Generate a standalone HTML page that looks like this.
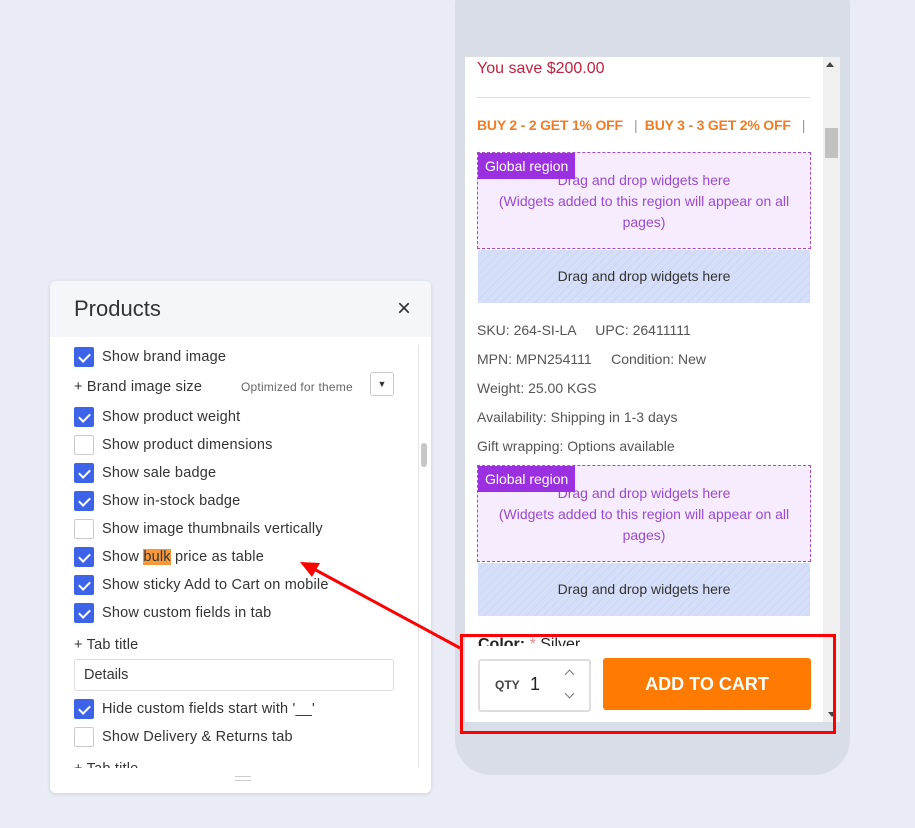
<!DOCTYPE html>
<html><head><meta charset="utf-8"><style>
*{box-sizing:border-box;margin:0;padding:0}
body{width:915px;height:828px;background:#e9ecf5;position:relative;overflow:hidden;font-family:"Liberation Sans",sans-serif}
.abs{position:absolute}
.phone{left:455px;top:-30px;width:395px;height:805px;background:#d9dde8;border-radius:36px}
.screen{left:465px;top:57px;width:375px;height:665px;background:#fff;overflow:hidden}
.sb{left:823px;top:57px;width:17px;height:665px;background:#f0f0f0}
.t{font-size:14px;color:#555}
.glob{left:477px;top:152px;width:334px;height:97px;background:#f6ecfd;border:1px dashed #a24cc8;color:#9a4ad0;font-size:14px;text-align:center;line-height:21px;padding-top:17px}
.glob b{position:absolute;left:0;top:0;background:#9b30e0;color:#fff;font-weight:normal;font-size:14px;padding:4px 7px;line-height:18px}
.drop{left:478px;width:332px;height:53px;background:repeating-linear-gradient(135deg,#d6dff9 0 5px,#cdd6f0 5px 6px);color:#333;font-size:14px;text-align:center;line-height:53px}
.panel{left:50px;top:281px;width:381px;height:512px;background:#fff;border-radius:6px;box-shadow:0 1px 4px rgba(0,0,0,.12);overflow:hidden}
.ph{height:56px;background:#f5f6fa;font-size:22px;color:#333;padding:15px 24px}
.row{position:absolute;left:24px;font-size:14.5px;color:#333;display:flex;align-items:center;height:20px;letter-spacing:0.2px}
.cb{width:20px;height:20px;border-radius:2px;margin-right:8px;border:1px solid #ccc;background:#fff;position:relative}
.cb.on{background:#3d64e8;border-color:#3d64e8}
.cb.on:after{content:"";position:absolute;left:6px;top:3px;width:5px;height:9px;border:solid #fff;border-width:0 2px 2px 0;transform:rotate(45deg)}
</style></head><body>
<div class="abs phone"></div>
<div class="abs screen"></div>
<div class="abs sb"></div>
<div class="abs" style="left:826px;top:62px;width:0;height:0;border:4px solid transparent;border-bottom:5px solid #444;border-top:0"></div>
<div class="abs" style="left:825px;top:128px;width:13px;height:30px;background:#c1c1c1"></div>
<div class="abs" style="left:477px;top:60px;font-size:16px;color:#c0223f">You save $200.00</div>
<div class="abs" style="left:477px;top:97px;width:333px;height:1px;background:#ddd"></div>
<div class="abs" style="left:477px;top:117px;font-size:14px;color:#f07c24;white-space:pre;font-weight:bold;letter-spacing:-0.2px">BUY 2 - 2 GET 1% OFF   <span style="color:#999;font-weight:normal">|</span>  BUY 3 - 3 GET 2% OFF   <span style="color:#999;font-weight:normal">|</span></div>
<div class="abs glob"><b>Global region</b>Drag and drop widgets here<br>(Widgets added to this region will appear on all pages)</div>
<div class="abs drop" style="top:250px">Drag and drop widgets here</div>
<div class="abs t" style="left:477px;top:322px">SKU: 264-SI-LA &nbsp;&nbsp;&nbsp;&nbsp;UPC: 26411111</div>
<div class="abs t" style="left:477px;top:351px">MPN: MPN254111 &nbsp;&nbsp;&nbsp;&nbsp;Condition: New</div>
<div class="abs t" style="left:477px;top:380px">Weight: 25.00 KGS</div>
<div class="abs t" style="left:477px;top:409px">Availability: Shipping in 1-3 days</div>
<div class="abs t" style="left:477px;top:438px">Gift wrapping: Options available</div>
<div class="abs glob" style="top:465px"><b>Global region</b>Drag and drop widgets here<br>(Widgets added to this region will appear on all pages)</div>
<div class="abs drop" style="top:563px">Drag and drop widgets here</div>
<div class="abs" style="left:478px;top:636px;font-size:16px;color:#222"><b>Color:</b> <span style="color:#e88">*</span> Silver</div>
<div class="abs" style="left:465px;top:646px;width:358px;height:76px;background:#fff"></div>
<div class="abs" style="left:478px;top:659px;width:113px;height:53px;border:2px solid #ddd;border-radius:3px;background:#fff"></div>
<div class="abs" style="left:495px;top:678px;font-size:12px;font-weight:bold;color:#444">QTY</div>
<div class="abs" style="left:530px;top:674px;font-size:18px;color:#222">1</div>
<div class="abs" style="left:566px;top:671px;width:7px;height:7px;border-left:1px solid #777;border-top:1px solid #777;transform:rotate(45deg)"></div>
<div class="abs" style="left:566px;top:690px;width:7px;height:7px;border-right:1px solid #777;border-bottom:1px solid #777;transform:rotate(45deg)"></div>
<div class="abs" style="left:603px;top:658px;width:208px;height:52px;background:#ff7a00;border-radius:3px;color:#fff;font-size:18px;font-weight:bold;text-align:center;line-height:52px">ADD TO CART</div>
<div class="abs" style="left:828px;top:712px;width:0;height:0;border:4px solid transparent;border-top:5px solid #444;border-bottom:0"></div>
<div class="abs" style="left:460px;top:634px;width:376px;height:100px;border:3px solid #f00"></div>
<div class="abs panel">
<div class="ph">Products<span style="position:absolute;right:20px;top:14px;font-size:24px;color:#333">×</span></div>
<div class="abs" style="left:368px;top:64px;width:13px;height:434px;border-left:1px solid #e5e5e5;background:#fff"></div>
<div class="abs" style="left:371px;top:162px;width:6px;height:24px;background:#c6c6c6;border-radius:3px"></div>
<div class="row" style="top:66px"><div class="cb on"></div>Show brand image</div>
<div class="row" style="top:96px;width:320px">+ Brand image size<span style="position:absolute;left:167px;font-size:12px;color:#666">Optimized for theme</span><span style="position:absolute;left:296px;top:-5px;width:24px;height:24px;border:1px solid #ccc;border-radius:3px;font-size:9px;text-align:center;line-height:22px;color:#333">▼</span></div>
<div class="row" style="top:126px"><div class="cb on"></div>Show product weight</div>
<div class="row" style="top:154px"><div class="cb"></div>Show product dimensions</div>
<div class="row" style="top:182px"><div class="cb on"></div>Show sale badge</div>
<div class="row" style="top:210px"><div class="cb on"></div>Show in-stock badge</div>
<div class="row" style="top:238px"><div class="cb"></div>Show image thumbnails vertically</div>
<div class="row" style="top:266px"><div class="cb on"></div>Show&nbsp;<span style="background:#f6993a">bulk</span>&nbsp;price as table</div>
<div class="row" style="top:294px"><div class="cb on"></div>Show sticky Add to Cart on mobile</div>
<div class="row" style="top:322px"><div class="cb on"></div>Show custom fields in tab</div>
<div class="row" style="top:354px">+ Tab title</div>
<div class="abs" style="left:24px;top:378px;width:320px;height:32px;border:1px solid #ddd;border-radius:3px;font-size:14.5px;padding:7px 9px;color:#333">Details</div>
<div class="row" style="top:418px"><div class="cb on"></div>Hide custom fields start with '__'</div>
<div class="row" style="top:446px"><div class="cb"></div>Show Delivery &amp; Returns tab</div>
<div class="row" style="top:478px">+ Tab title</div>
<div class="abs" style="left:0;top:487px;width:381px;height:25px;background:#fff"></div>
<div class="abs" style="left:185px;top:495px;width:16px;height:5px;border-top:1px solid #ccc;border-bottom:1px solid #ccc"></div>
</div>
<svg class="abs" style="left:290px;top:555px" width="175" height="100"><line x1="170" y1="93" x2="22" y2="13" stroke="#f00" stroke-width="3"/><polygon points="10,7 30,8 22,22" fill="#f00"/></svg>
</body></html>
